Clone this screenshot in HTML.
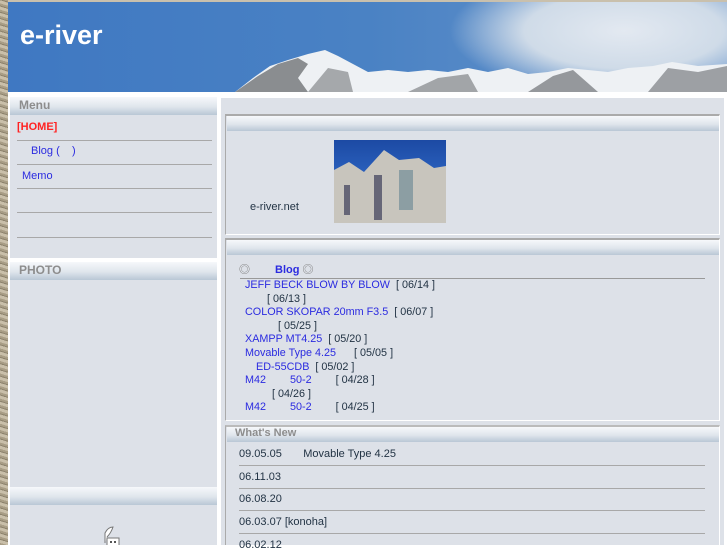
<!DOCTYPE html>
<html><head><meta charset="utf-8"><style>
*{margin:0;padding:0;box-sizing:border-box}
body{width:727px;height:545px;overflow:hidden;background:#fff;font-family:"Liberation Sans","Noto Sans CJK JP",sans-serif;font-size:11px;position:relative}
.a{position:absolute}
.hd{background:linear-gradient(#f6f8fb,#dfe5ec 55%,#b9c7d5);}
.bar{height:1px;background:#a8a8a8}
.blue{color:#2b2be0}
.dk{color:#234}
</style></head><body>
<div class="a" style="left:0;top:0;width:8px;height:545px;background:repeating-linear-gradient(17deg,#a99e86 0 2px,#c9bfa9 2px 5px,#8d836d 5px 6px)"></div>
<div class="a" style="left:8px;top:0;width:719px;height:2px;background:#c9c0ad"></div>
<!-- header -->
<div class="a" style="left:8px;top:2px;width:719px;height:90px;background:linear-gradient(90deg,#3f78c2,#4a82c4 50%,#6b97cc);overflow:hidden">
<div class="a" style="left:440px;top:-25px;width:320px;height:120px;background:radial-gradient(ellipse at 55% 45%,#e3e9f1 0,#cfdbe8 40%,rgba(120,160,210,0) 70%)"></div>
<svg class="a" style="left:0;top:0" width="719" height="90"><polygon points="227,90 245,76 262,64 280,58 300,52 317,48 330,54 345,62 360,70 380,68 400,70 420,68 440,70 460,66 480,70 500,66 520,72 540,70 560,66 580,68 600,70 620,66 645,64 664,60 690,64 719,62 719,90" fill="#eef1f4"/><polygon points="227,90 250,74 270,62 290,56 300,62 290,76 300,90" fill="#8a8d90"/><polygon points="300,90 320,66 340,70 345,90" fill="#a5a8ab"/><polygon points="400,90 430,76 460,72 470,90" fill="#a2a5a8"/><polygon points="520,90 545,74 565,68 590,90" fill="#95989c"/><polygon points="640,90 660,66 690,70 719,64 719,90" fill="#9da0a4"/></svg>
<div class="a" style="left:12px;top:18px;color:#fff;font-size:27px;font-weight:bold">e-river</div>
</div>
<!-- sidebar -->
<div class="a" style="left:10px;top:97px;width:207px;height:390px;background:#dde1e8"></div>
<div class="a hd" style="left:10px;top:97px;width:207px;height:18px"><span class="a" style="left:9px;top:1px;color:#8d8d8d;font-weight:bold;font-size:12px">Menu</span></div>
<div class="a" style="left:17px;top:121px;color:#f22;font-weight:bold">[HOME]</div>
<div class="a bar" style="left:17px;top:140px;width:195px"></div>
<div class="a blue" style="left:31px;top:145px">Blog (&nbsp;&nbsp;&nbsp;&nbsp;)</div>
<div class="a bar" style="left:17px;top:164px;width:195px"></div>
<div class="a blue" style="left:22px;top:170px">Memo</div>
<div class="a bar" style="left:17px;top:188px;width:195px"></div>
<div class="a bar" style="left:17px;top:212px;width:195px"></div>
<div class="a bar" style="left:17px;top:237px;width:195px"></div>
<div class="a" style="left:10px;top:258px;width:207px;height:4px;background:#fff"></div>
<div class="a hd" style="left:10px;top:262px;width:207px;height:18px"><span class="a" style="left:9px;top:1px;color:#8d8d8d;font-weight:bold;font-size:12px">PHOTO</span></div>
<div class="a" style="left:10px;top:487px;width:207px;height:58px;background:#dde1e8"></div>
<div class="a hd" style="left:10px;top:487px;width:207px;height:18px"></div>
<svg class="a" style="left:100px;top:525px" width="25" height="20"><path d="M5,18 L5,8 Q8,2 13,2 Q11,8 7,12" fill="#fff" stroke="#777"/><rect x="7" y="13" width="12" height="9" fill="#fff" stroke="#777"/><rect x="10" y="16" width="2" height="2" fill="#555"/><rect x="14" y="16" width="2" height="2" fill="#555"/></svg>
<!-- main -->
<div class="a" style="left:221px;top:98px;width:503px;height:447px;background:#dde1e8"></div>
<div class="a" style="left:225px;top:114px;width:495px;height:121px;border:1px solid #fff;border-top:2px solid #aaa;border-left-color:#aaa"></div>
<div class="a hd" style="left:227px;top:116px;width:492px;height:15px"></div>
<div class="a dk" style="left:250px;top:201px">e-river.net</div>
<div class="a" style="left:334px;top:140px;width:112px;height:83px;background:linear-gradient(#1c4aa4,#2a60bc 40%,#b7b6b0 40%,#a9a69d)"></div>
<svg class="a" style="left:334px;top:140px" width="112" height="83"><polygon points="0,30 15,22 30,32 50,10 65,20 85,18 100,28 112,26 112,83 0,83" fill="#c8c5bd"/><rect x="40" y="35" width="8" height="45" fill="#667"/><rect x="65" y="30" width="14" height="40" fill="#8c9ea3"/><rect x="10" y="45" width="6" height="30" fill="#667"/></svg>
<div class="a" style="left:225px;top:238px;width:495px;height:183px;border:1px solid #fff;border-top:2px solid #aaa;border-left-color:#aaa"></div>
<div class="a hd" style="left:227px;top:240px;width:492px;height:15px"></div>
<div class="a" style="left:239px;top:261px;color:#777">◎</div>
<div class="a blue" style="left:275px;top:261px;font-weight:bold">Blog <span style="color:#777;font-weight:normal">◎</span></div>
<div class="a" style="left:240px;top:278px;width:465px;height:1px;background:#999"></div>
<div class="a" style="left:245px;top:279px;line-height:13.6px;width:400px;font-size:10.8px">
<div><span class="blue">JEFF BECK BLOW BY BLOW</span> <span class="dk">&nbsp;[ 06/14 ]</span></div>
<div class="dk" style="padding-left:22px">[ 06/13 ]</div>
<div><span class="blue">COLOR SKOPAR 20mm F3.5</span> <span class="dk">&nbsp;[ 06/07 ]</span></div>
<div class="dk" style="padding-left:33px">[ 05/25 ]</div>
<div><span class="blue">XAMPP MT4.25</span> <span class="dk">&nbsp;[ 05/20 ]</span></div>
<div><span class="blue">Movable Type 4.25</span> <span class="dk">&nbsp;&nbsp;&nbsp;&nbsp;&nbsp;[ 05/05 ]</span></div>
<div style="padding-left:11px"><span class="blue">ED-55CDB</span> <span class="dk">&nbsp;[ 05/02 ]</span></div>
<div><span class="blue">M42 &nbsp;&nbsp;&nbsp;&nbsp;&nbsp;&nbsp;&nbsp;50-2</span> <span class="dk">&nbsp;&nbsp;&nbsp;&nbsp;&nbsp;&nbsp;&nbsp;[ 04/28 ]</span></div>
<div class="dk" style="padding-left:27px">[ 04/26 ]</div>
<div><span class="blue">M42 &nbsp;&nbsp;&nbsp;&nbsp;&nbsp;&nbsp;&nbsp;50-2</span> <span class="dk">&nbsp;&nbsp;&nbsp;&nbsp;&nbsp;&nbsp;&nbsp;[ 04/25 ]</span></div>
</div>
<div class="a" style="left:225px;top:425px;width:495px;height:120px;border:1px solid #fff;border-top:2px solid #bbb;border-left-color:#aaa;border-bottom:none"></div>
<div class="a hd" style="left:227px;top:427px;width:492px;height:15px"><span class="a" style="left:8px;top:0;color:#8d8d8d;font-weight:bold;font-size:11px">What's New</span></div>
<div class="a dk" style="left:239px;top:448px">09.05.05 &nbsp;&nbsp;&nbsp;&nbsp;&nbsp;&nbsp;Movable Type 4.25</div>
<div class="a bar" style="left:239px;top:465px;width:466px"></div>
<div class="a dk" style="left:239px;top:471px">06.11.03</div>
<div class="a bar" style="left:239px;top:488px;width:466px"></div>
<div class="a dk" style="left:239px;top:493px">06.08.20</div>
<div class="a bar" style="left:239px;top:510px;width:466px"></div>
<div class="a dk" style="left:239px;top:516px">06.03.07 [konoha]</div>
<div class="a bar" style="left:239px;top:533px;width:466px"></div>
<div class="a dk" style="left:239px;top:539px">06.02.12</div>
</body></html>
